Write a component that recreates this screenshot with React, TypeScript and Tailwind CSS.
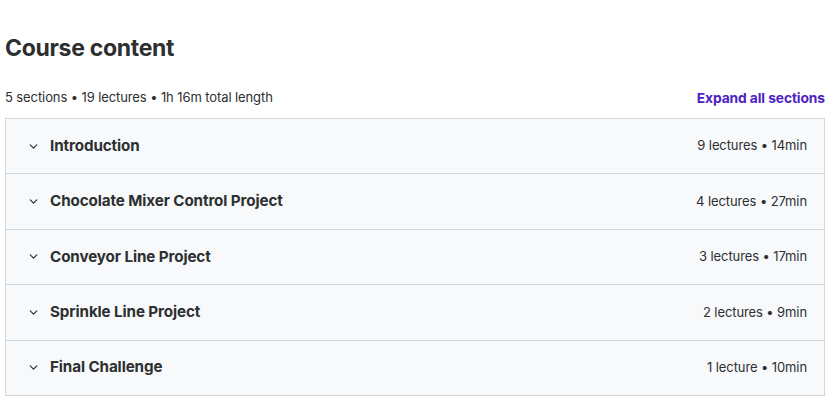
import { ChevronDown } from "lucide-react";

const sections = [
  { title: "Introduction", meta: "9 lectures • 14min" },
  { title: "Chocolate Mixer Control Project", meta: "4 lectures • 27min" },
  { title: "Conveyor Line Project", meta: "3 lectures • 17min" },
  { title: "Sprinkle Line Project", meta: "2 lectures • 9min" },
  { title: "Final Challenge", meta: "1 lecture • 10min" },
];

export default function App() {
  return (
    <div className="min-h-[402px] w-[838px] bg-white font-['Inter',sans-serif] text-[#2d2f31]">
      <div className="px-[5px] pt-[34px] pr-[13px]">
        {/* Heading */}
        <h2 className="text-[23px] font-bold leading-[28px] tracking-[-0.3px]">
          Course content
        </h2>

        {/* Summary */}
        <div className="mt-[26px] flex h-[20px] items-center justify-between">
          <span className="text-[13px] tracking-[-0.1px]">
            5 sections • 19 lectures • 1h 16m total length
          </span>
          <button className="text-[13.8px] font-bold tracking-[-0.1px] text-[#5022c3]">
            Expand all sections
          </button>
        </div>

        {/* Sections */}
        <div className="mt-[10px] border border-b-0 border-[#d1d7dc]">
          {sections.map((s) => (
            <div
              key={s.title}
              className="flex h-[55.4px] items-center justify-between border-b border-[#d1d7dc] bg-[#f7f9fa] pl-[21px] pr-[17px]"
            >
              <div className="flex items-center gap-[10px]">
                <ChevronDown size={13} strokeWidth={2.2} className="text-[#2d2f31]" />
                <span className="text-[15.2px] font-bold tracking-[-0.1px]">{s.title}</span>
              </div>
              <span className="text-[13px] tracking-[-0.1px]">{s.meta}</span>
            </div>
          ))}
        </div>
      </div>
    </div>
  );
}
